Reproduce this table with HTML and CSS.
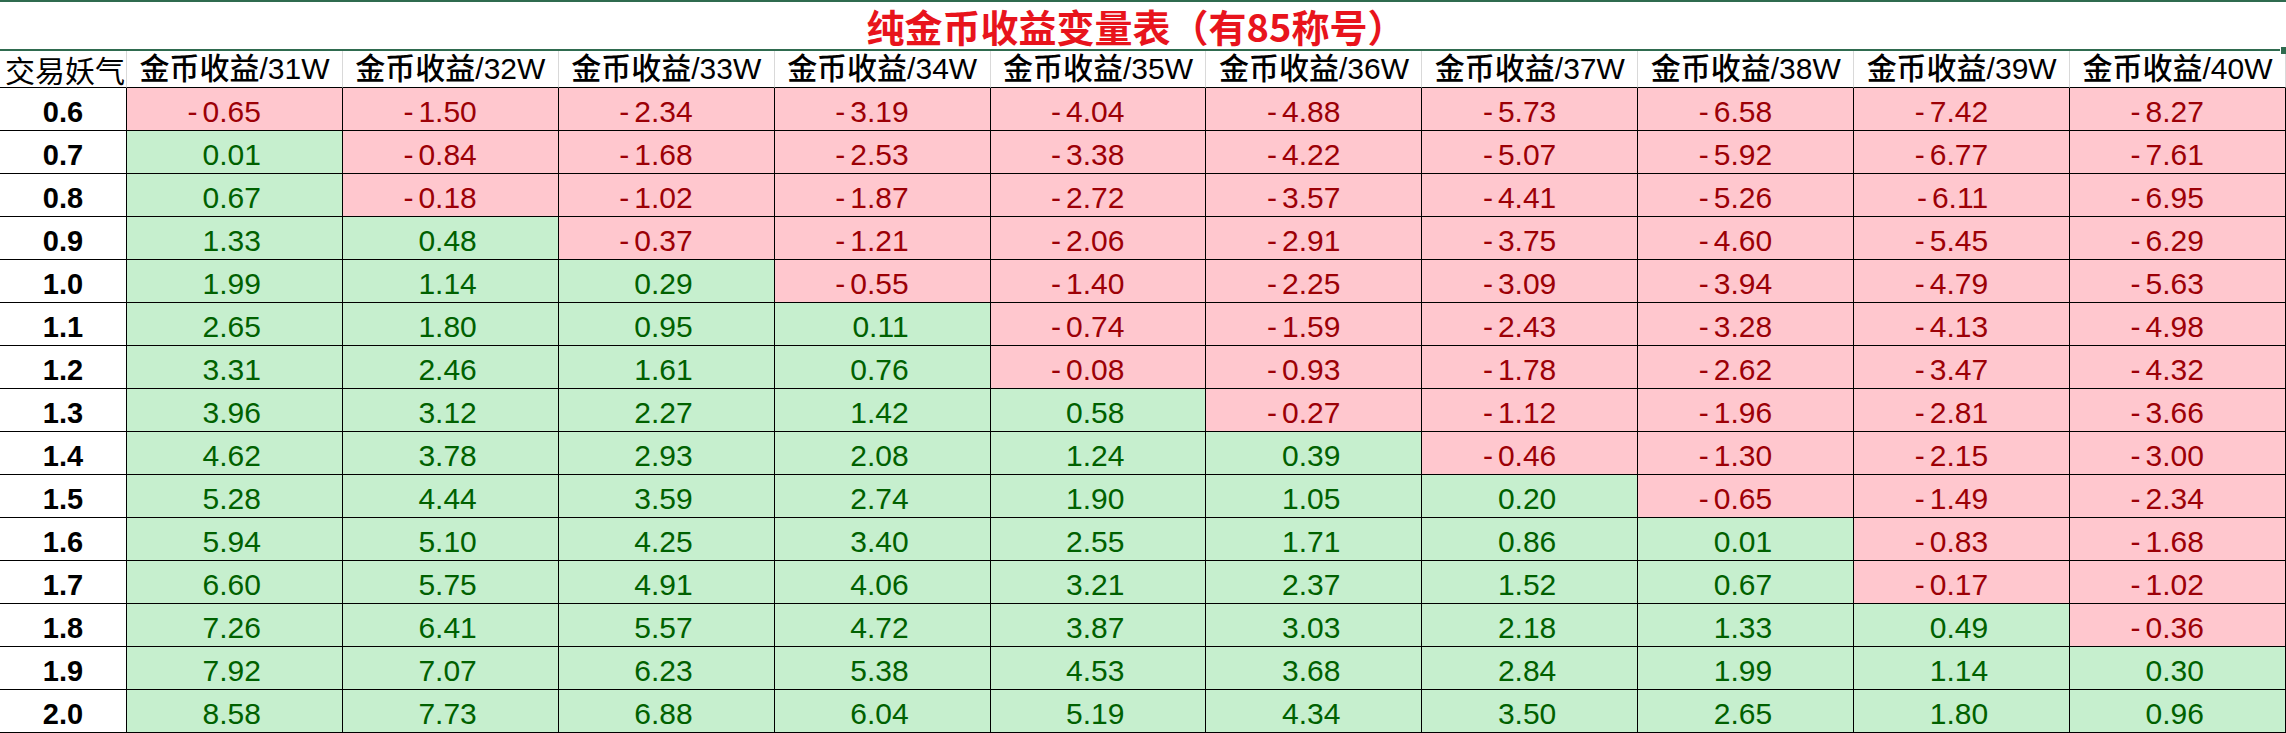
FILE: index.html
```html
<!DOCTYPE html>
<html lang="zh-CN">
<head>
<meta charset="utf-8">
<title>纯金币收益变量表</title>
<link rel="stylesheet" href="styles.css">
</head>
<body>
<div class="sheet">
  <div class="title">纯金币收益变量表（有85称号）<span class="handle"></span></div>
  <div class="grid">
    <div class="hd first">交易妖气</div>
    <div class="hd">金币收益/31W</div>
    <div class="hd">金币收益/32W</div>
    <div class="hd">金币收益/33W</div>
    <div class="hd">金币收益/34W</div>
    <div class="hd">金币收益/35W</div>
    <div class="hd">金币收益/36W</div>
    <div class="hd">金币收益/37W</div>
    <div class="hd">金币收益/38W</div>
    <div class="hd">金币收益/39W</div>
    <div class="hd">金币收益/40W</div>

    <div class="lb">0.6</div>
    <div class="c neg">-0.65</div><div class="c neg">-1.50</div><div class="c neg">-2.34</div><div class="c neg">-3.19</div><div class="c neg">-4.04</div><div class="c neg">-4.88</div><div class="c neg">-5.73</div><div class="c neg">-6.58</div><div class="c neg">-7.42</div><div class="c neg">-8.27</div>

    <div class="lb">0.7</div>
    <div class="c pos">0.01</div><div class="c neg">-0.84</div><div class="c neg">-1.68</div><div class="c neg">-2.53</div><div class="c neg">-3.38</div><div class="c neg">-4.22</div><div class="c neg">-5.07</div><div class="c neg">-5.92</div><div class="c neg">-6.77</div><div class="c neg">-7.61</div>

    <div class="lb">0.8</div>
    <div class="c pos">0.67</div><div class="c neg">-0.18</div><div class="c neg">-1.02</div><div class="c neg">-1.87</div><div class="c neg">-2.72</div><div class="c neg">-3.57</div><div class="c neg">-4.41</div><div class="c neg">-5.26</div><div class="c neg">-6.11</div><div class="c neg">-6.95</div>

    <div class="lb">0.9</div>
    <div class="c pos">1.33</div><div class="c pos">0.48</div><div class="c neg">-0.37</div><div class="c neg">-1.21</div><div class="c neg">-2.06</div><div class="c neg">-2.91</div><div class="c neg">-3.75</div><div class="c neg">-4.60</div><div class="c neg">-5.45</div><div class="c neg">-6.29</div>

    <div class="lb">1.0</div>
    <div class="c pos">1.99</div><div class="c pos">1.14</div><div class="c pos">0.29</div><div class="c neg">-0.55</div><div class="c neg">-1.40</div><div class="c neg">-2.25</div><div class="c neg">-3.09</div><div class="c neg">-3.94</div><div class="c neg">-4.79</div><div class="c neg">-5.63</div>

    <div class="lb">1.1</div>
    <div class="c pos">2.65</div><div class="c pos">1.80</div><div class="c pos">0.95</div><div class="c pos">0.11</div><div class="c neg">-0.74</div><div class="c neg">-1.59</div><div class="c neg">-2.43</div><div class="c neg">-3.28</div><div class="c neg">-4.13</div><div class="c neg">-4.98</div>

    <div class="lb">1.2</div>
    <div class="c pos">3.31</div><div class="c pos">2.46</div><div class="c pos">1.61</div><div class="c pos">0.76</div><div class="c neg">-0.08</div><div class="c neg">-0.93</div><div class="c neg">-1.78</div><div class="c neg">-2.62</div><div class="c neg">-3.47</div><div class="c neg">-4.32</div>

    <div class="lb">1.3</div>
    <div class="c pos">3.96</div><div class="c pos">3.12</div><div class="c pos">2.27</div><div class="c pos">1.42</div><div class="c pos">0.58</div><div class="c neg">-0.27</div><div class="c neg">-1.12</div><div class="c neg">-1.96</div><div class="c neg">-2.81</div><div class="c neg">-3.66</div>

    <div class="lb">1.4</div>
    <div class="c pos">4.62</div><div class="c pos">3.78</div><div class="c pos">2.93</div><div class="c pos">2.08</div><div class="c pos">1.24</div><div class="c pos">0.39</div><div class="c neg">-0.46</div><div class="c neg">-1.30</div><div class="c neg">-2.15</div><div class="c neg">-3.00</div>

    <div class="lb">1.5</div>
    <div class="c pos">5.28</div><div class="c pos">4.44</div><div class="c pos">3.59</div><div class="c pos">2.74</div><div class="c pos">1.90</div><div class="c pos">1.05</div><div class="c pos">0.20</div><div class="c neg">-0.65</div><div class="c neg">-1.49</div><div class="c neg">-2.34</div>

    <div class="lb">1.6</div>
    <div class="c pos">5.94</div><div class="c pos">5.10</div><div class="c pos">4.25</div><div class="c pos">3.40</div><div class="c pos">2.55</div><div class="c pos">1.71</div><div class="c pos">0.86</div><div class="c pos">0.01</div><div class="c neg">-0.83</div><div class="c neg">-1.68</div>

    <div class="lb">1.7</div>
    <div class="c pos">6.60</div><div class="c pos">5.75</div><div class="c pos">4.91</div><div class="c pos">4.06</div><div class="c pos">3.21</div><div class="c pos">2.37</div><div class="c pos">1.52</div><div class="c pos">0.67</div><div class="c neg">-0.17</div><div class="c neg">-1.02</div>

    <div class="lb">1.8</div>
    <div class="c pos">7.26</div><div class="c pos">6.41</div><div class="c pos">5.57</div><div class="c pos">4.72</div><div class="c pos">3.87</div><div class="c pos">3.03</div><div class="c pos">2.18</div><div class="c pos">1.33</div><div class="c pos">0.49</div><div class="c neg">-0.36</div>

    <div class="lb">1.9</div>
    <div class="c pos">7.92</div><div class="c pos">7.07</div><div class="c pos">6.23</div><div class="c pos">5.38</div><div class="c pos">4.53</div><div class="c pos">3.68</div><div class="c pos">2.84</div><div class="c pos">1.99</div><div class="c pos">1.14</div><div class="c pos">0.30</div>

    <div class="lb">2.0</div>
    <div class="c pos">8.58</div><div class="c pos">7.73</div><div class="c pos">6.88</div><div class="c pos">6.04</div><div class="c pos">5.19</div><div class="c pos">4.34</div><div class="c pos">3.50</div><div class="c pos">2.65</div><div class="c pos">1.80</div><div class="c pos">0.96</div>
  </div>
</div>
</body>
</html>
```
FILE: styles.css
```css
html, body {
  margin: 0;
  padding: 0;
  background: #ffffff;
  overflow: hidden;
}

.sheet {
  width: 2286px;
  height: 733px;
  overflow: hidden;
  font-family: "Liberation Sans", "Noto Sans CJK SC", sans-serif;
}

.title {
  position: relative;
  box-sizing: border-box;
  height: 51px;
  border-top: 2px solid #2f6b4f;
  border-bottom: 2px solid #2f6b4f;
  text-align: center;
  padding-right: 14px;
  font-family: "Noto Sans CJK SC", sans-serif;
  font-weight: 700;
  font-size: 38px;
  line-height: 47px;
  color: #e8141c;
}

.handle {
  position: absolute;
  right: 0;
  bottom: -5px;
  width: 5px;
  height: 7px;
  background: #2f6b4f;
  border-left: 1px solid #ffffff;
}

.grid {
  display: grid;
  grid-template-columns: 127px repeat(10, 1fr);
  grid-template-rows: 37px;
  grid-auto-rows: 43px;
}

.grid > div {
  box-sizing: border-box;
  white-space: nowrap;
  overflow: hidden;
}

.grid > .hd {
  height: 37px;
  border-right: 1px solid #d9d9d9;
  border-bottom: 1px solid #000000;
  text-align: center;
  font-size: 30px;
  font-weight: 500;
  line-height: 36px;
  color: #000000;
}

.grid > .hd.first {
  text-align: left;
  padding-left: 5px;
  font-weight: 400;
  font-family: "Noto Sans CJK SC", serif;
}

.lb, .c {
  height: 43px;
  border-right: 1px solid #000000;
  border-bottom: 1px solid #000000;
  padding-top: 6px;
  line-height: 36px;
  font-size: 30px;
}

.lb {
  background: #ffffff;
  color: #000000;
  font-weight: 700;
  font-size: 29px;
  text-align: center;
}

.c {
  text-align: right;
  padding-right: 81px;
}

.neg {
  background: #ffc7ce;
  color: #9c0006;
}

.neg::first-letter {
  margin-right: 5px;
}

.pos {
  background: #c6efce;
  color: #006100;
}
```
